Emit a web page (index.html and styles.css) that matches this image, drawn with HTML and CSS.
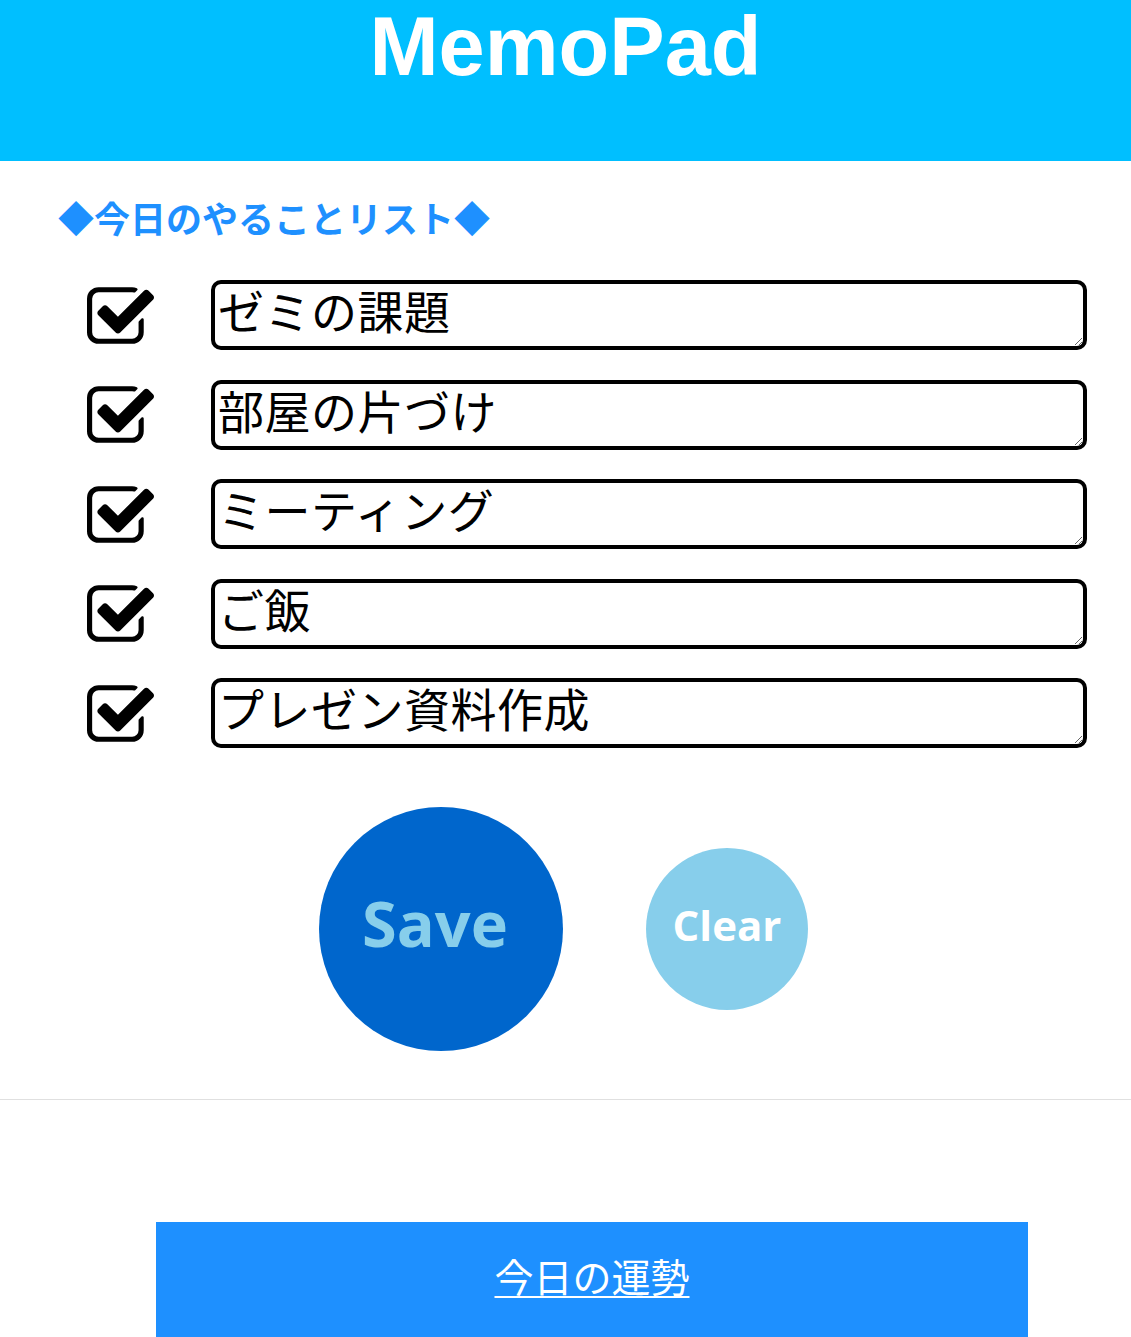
FILE: index.html
```html
<!DOCTYPE html>
<html lang="ja">
<head>
<meta charset="utf-8">
<title>MemoPad</title>
<link rel="stylesheet" href="styles.css">
</head>
<body>
<header class="header">
  <h1 class="title">MemoPad</h1>
</header>
<main class="main">
  <h2 class="list-title">◆今日のやることリスト◆</h2>
  <ul class="todo-list">
    <li class="todo-row">
      <svg class="check" viewBox="64 128 1663 1408"><path d="M1472 930v318q0 119-84.5 203.5t-203.5 84.5h-832q-119 0-203.5-84.5t-84.5-203.5v-832q0-119 84.5-203.5t203.5-84.5h832q63 0 117 25 15 7 18 23 3 17-9 29l-49 49q-10 10-23 10-3 0-9-2-23-6-45-6h-832q-66 0-113 47t-47 113v832q0 66 47 113t113 47h832q66 0 113-47t47-113v-254q0-13 9-22l64-64q10-10 23-10 6 0 12 3 20 8 20 29zm231-489l-814 814q-24 24-57 24t-57-24l-430-430q-24-24-24-57t24-57l110-110q24-24 57-24t57 24l263 263 647-647q24-24 57-24t57 24l110 110q24 24 24 57t-24 57z"/></svg>
      <textarea class="todo-text">ゼミの課題</textarea>
    </li>
    <li class="todo-row">
      <svg class="check" viewBox="64 128 1663 1408"><path d="M1472 930v318q0 119-84.5 203.5t-203.5 84.5h-832q-119 0-203.5-84.5t-84.5-203.5v-832q0-119 84.5-203.5t203.5-84.5h832q63 0 117 25 15 7 18 23 3 17-9 29l-49 49q-10 10-23 10-3 0-9-2-23-6-45-6h-832q-66 0-113 47t-47 113v832q0 66 47 113t113 47h832q66 0 113-47t47-113v-254q0-13 9-22l64-64q10-10 23-10 6 0 12 3 20 8 20 29zm231-489l-814 814q-24 24-57 24t-57-24l-430-430q-24-24-24-57t24-57l110-110q24-24 57-24t57 24l263 263 647-647q24-24 57-24t57 24l110 110q24 24 24 57t-24 57z"/></svg>
      <textarea class="todo-text">部屋の片づけ</textarea>
    </li>
    <li class="todo-row">
      <svg class="check" viewBox="64 128 1663 1408"><path d="M1472 930v318q0 119-84.5 203.5t-203.5 84.5h-832q-119 0-203.5-84.5t-84.5-203.5v-832q0-119 84.5-203.5t203.5-84.5h832q63 0 117 25 15 7 18 23 3 17-9 29l-49 49q-10 10-23 10-3 0-9-2-23-6-45-6h-832q-66 0-113 47t-47 113v832q0 66 47 113t113 47h832q66 0 113-47t47-113v-254q0-13 9-22l64-64q10-10 23-10 6 0 12 3 20 8 20 29zm231-489l-814 814q-24 24-57 24t-57-24l-430-430q-24-24-24-57t24-57l110-110q24-24 57-24t57 24l263 263 647-647q24-24 57-24t57 24l110 110q24 24 24 57t-24 57z"/></svg>
      <textarea class="todo-text">ミーティング</textarea>
    </li>
    <li class="todo-row">
      <svg class="check" viewBox="64 128 1663 1408"><path d="M1472 930v318q0 119-84.5 203.5t-203.5 84.5h-832q-119 0-203.5-84.5t-84.5-203.5v-832q0-119 84.5-203.5t203.5-84.5h832q63 0 117 25 15 7 18 23 3 17-9 29l-49 49q-10 10-23 10-3 0-9-2-23-6-45-6h-832q-66 0-113 47t-47 113v832q0 66 47 113t113 47h832q66 0 113-47t47-113v-254q0-13 9-22l64-64q10-10 23-10 6 0 12 3 20 8 20 29zm231-489l-814 814q-24 24-57 24t-57-24l-430-430q-24-24-24-57t24-57l110-110q24-24 57-24t57 24l263 263 647-647q24-24 57-24t57 24l110 110q24 24 24 57t-24 57z"/></svg>
      <textarea class="todo-text">ご飯</textarea>
    </li>
    <li class="todo-row">
      <svg class="check" viewBox="64 128 1663 1408"><path d="M1472 930v318q0 119-84.5 203.5t-203.5 84.5h-832q-119 0-203.5-84.5t-84.5-203.5v-832q0-119 84.5-203.5t203.5-84.5h832q63 0 117 25 15 7 18 23 3 17-9 29l-49 49q-10 10-23 10-3 0-9-2-23-6-45-6h-832q-66 0-113 47t-47 113v832q0 66 47 113t113 47h832q66 0 113-47t47-113v-254q0-13 9-22l64-64q10-10 23-10 6 0 12 3 20 8 20 29zm231-489l-814 814q-24 24-57 24t-57-24l-430-430q-24-24-24-57t24-57l110-110q24-24 57-24t57 24l263 263 647-647q24-24 57-24t57 24l110 110q24 24 24 57t-24 57z"/></svg>
      <textarea class="todo-text">プレゼン資料作成</textarea>
    </li>
  </ul>
  <div class="actions">
    <button class="btn btn-save">Save</button>
    <button class="btn btn-clear">Clear</button>
  </div>
</main>
<hr class="divider">
<footer class="footer">
  <div class="fortune"><a class="fortune-link" href="#">今日の運勢</a></div>
</footer>
</body>
</html>
```

FILE: styles.css
```css
html, body {
  margin: 0;
  padding: 0;
  background: #ffffff;
}
body {
  font-family: "Noto Sans CJK JP", "Noto Sans", sans-serif;
  width: 1131px;
  overflow: hidden;
}
.header {
  background: #00bfff;
  height: 161px;
  padding-top: 1px;
  box-sizing: border-box;
}
.title {
  margin: 0;
  text-align: center;
  color: #ffffff;
  font-family: "Liberation Sans", Arial, sans-serif;
  font-weight: 700;
  font-size: 83px;
  line-height: 92px;
}
.main {
  padding-top: 32px;
}
.list-title {
  margin: 0 0 0 58px;
  color: #1e90ff;
  font-size: 36px;
  font-weight: 700;
  line-height: 49px;
}
.todo-list {
  list-style: none;
  margin: 38px 0 0;
  padding: 0 44px 0 87px;
  display: flex;
  flex-direction: column;
  gap: 29.5px;
}
.todo-row {
  display: flex;
  align-items: center;
  gap: 57px;
}
.check {
  width: 67px;
  height: 57px;
  flex: none;
  fill: #000000;
}
.todo-text {
  flex: 1;
  height: 70px;
  box-sizing: border-box;
  border: 4px solid #000000;
  border-radius: 10px;
  padding: 1px 3px 0;
  margin: 0;
  font-family: "Noto Sans CJK JP", sans-serif;
  font-size: 46px;
  letter-spacing: 0.5px;
  line-height: 1.05;
  color: #000000;
  background: #ffffff;
  overflow: hidden;
}
.actions {
  display: flex;
  justify-content: center;
  align-items: center;
  gap: 83px;
  margin-top: 59px;
  padding-right: 4px;
}
.btn {
  border: none;
  border-radius: 50%;
  padding: 0;
  font-family: "Open Sans", sans-serif;
  font-weight: 700;
  cursor: pointer;
}
.btn-save {
  width: 244px;
  height: 244px;
  background: #0066cc;
  color: #87ceeb;
  font-size: 63px;
  padding: 0 12px 14px 0;
}
.btn-clear {
  width: 162px;
  height: 162px;
  background: #87ceeb;
  color: #ffffff;
  font-size: 42px;
  padding: 0 0 10px 0;
}
.divider {
  margin: 48px 0 0;
  border: none;
  border-top: 1px solid #e0e0e0;
}
.footer {
  padding: 122px 0 0 156px;
}
.fortune {
  width: 872px;
  height: 160px;
  background: #1e90ff;
  text-align: center;
  padding-top: 25px;
  box-sizing: border-box;
}
.fortune-link {
  color: #ffffff;
  font-size: 39px;
  line-height: 56px;
  text-decoration: underline;
  text-decoration-thickness: 2px;
  text-underline-offset: 4px;
}
```
